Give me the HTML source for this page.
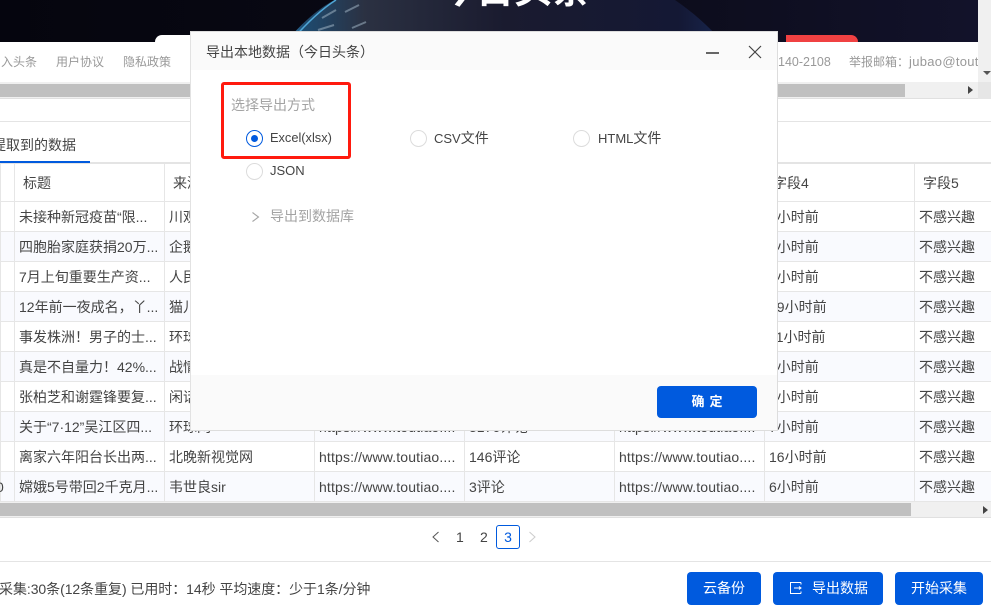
<!DOCTYPE html>
<html lang="zh">
<head>
<meta charset="utf-8">
<title>导出本地数据</title>
<style>
*{box-sizing:border-box}
html,body{margin:0;padding:0;width:991px;height:611px;overflow:hidden;background:#fff;font-family:"Liberation Sans","Noto Sans CJK SC",sans-serif;font-size:14px;color:#444}
.a{position:absolute;white-space:nowrap}
.clip{position:absolute;overflow:hidden;white-space:nowrap}
#tb{position:absolute;left:0;top:162px;border-collapse:collapse;table-layout:fixed;width:991px}
#tb td{height:30px;padding:3px 0 0 4px;border:1px solid #e6e6e6;white-space:nowrap;overflow:hidden;line-height:25px;color:#444;font-size:14px}
#tb tr:first-child td{height:38px;padding-left:8px;border-top:2px solid #e4e4e4}
#tb tr:nth-child(odd):not(:first-child) td{background:#f9fafe}
.u{letter-spacing:.15px}
.btn{position:absolute;top:572px;height:33px;background:#005ade;border-radius:4px;color:#fff;font-size:14px;line-height:33px;text-align:center}
.radio{position:absolute;width:17px;height:17px;border-radius:50%;border:1px solid #dcdcdc;background:#fff}
.l{font-size:13px}
</style>
</head>
<body>
<div class="clip" style="left:0;top:0;width:978px;height:42px;background:#0b0b18">
<svg width="978" height="42" style="position:absolute;left:0;top:0">
<defs>
<linearGradient id="e" x1="0" x2="1" y1="0" y2="0">
<stop offset="0" stop-color="#3b8fc4"/><stop offset=".04" stop-color="#1e4b70"/><stop offset=".18" stop-color="#2b3142"/><stop offset=".5" stop-color="#1a1b2f"/><stop offset=".9" stop-color="#141834"/><stop offset="1" stop-color="#18264e"/>
</linearGradient>
<linearGradient id="s" x1="0" x2="1" y1="0" y2="0">
<stop offset="0" stop-color="#05050e"/><stop offset=".55" stop-color="#0a0a16"/><stop offset="1" stop-color="#12122a"/>
</linearGradient>
</defs>
<rect width="978" height="42" fill="url(#s)"/>
<path d="M286 42C300 25 318 8 338 -2L672 -2C690 10 708 25 722 42Z" fill="url(#e)"/>
<path d="M292 40C306 24 320 10 336 0" fill="none" stroke="#4fa6d6" stroke-width="1.500"/>
<path d="M322 18l14-8M345 12l14-7M318 30l16-5M352 28l14-6" stroke="#9fb3c2" stroke-width="2" opacity=".55" fill="none"/>
</svg>
<div class="a" style="left:438px;top:-27px;font-size:38px;line-height:36px;font-weight:700;color:#fff">今日头条</div>
</div>
<div class="a" style="left:155px;top:35px;width:70px;height:10px;background:#fff;border-radius:7px 0 0 0"></div>
<div class="a" style="left:786px;top:35px;width:72px;height:8px;background:#f04142;border-radius:0 7px 0 0"></div>

<div class="clip" style="left:0;top:42px;width:978px;height:40px;background:#fff;color:#999;font-size:12px;line-height:40px">
<span class="a" style="left:0;top:0;width:37px;overflow:hidden"><span style="margin-left:-11px">加入头条</span></span>
<span class="a" style="left:56px;top:0">用户协议</span>
<span class="a" style="left:123px;top:0">隐私政策</span>
<span class="a" style="left:778px;top:0;font-size:12.500px">140-2108</span>
<span class="a" style="left:849px;top:0;width:129px;overflow:hidden;font-size:12px">举报邮箱：<span style="font-size:13px;letter-spacing:.3px">jubao@toutiao.com</span></span>
</div>
<div class="a" style="left:978px;top:0;width:13px;height:82px;background:#f0f0f0"></div>
<div class="a" style="left:983px;top:71px;width:0;height:0;border:4px solid transparent;border-top:4px solid #555"></div>
<div class="a" style="left:0;top:82px;width:978px;height:17px;background:#f0f0f0;border-bottom:1px solid #e0e0e0"></div>
<div class="a" style="left:978px;top:82px;width:13px;height:17px;background:#e6e6e6"></div>
<div class="a" style="left:0;top:84px;width:905px;height:13px;background:#c0c0c0"></div>
<div class="a" style="left:968px;top:86px;width:0;height:0;border:4px solid transparent;border-left:5px solid #444"></div>
<div class="a" style="left:0;top:121px;width:991px;height:1px;background:#e4e4e4"></div>
<div class="clip" style="left:0;top:135px;width:90px;height:20px;font-size:14px;line-height:20px;color:#444"><span style="margin-left:-8px">提取到的数据</span></div>

<table id="tb">
<colgroup><col style="width:14px"><col style="width:150px"><col style="width:150px"><col style="width:150px"><col style="width:150px"><col style="width:150px"><col style="width:150px"><col style="width:77px"></colgroup>
<tr><td></td><td>标题</td><td>来源</td><td></td><td></td><td></td><td>字段4</td><td>字段5</td></tr>
<tr><td></td><td>未接种新冠疫苗“限...</td><td>川观新闻</td><td></td><td></td><td></td><td>6小时前</td><td>不感兴趣</td></tr>
<tr><td></td><td>四胞胎家庭获捐20万...</td><td>企鹅号</td><td></td><td></td><td></td><td>6小时前</td><td>不感兴趣</td></tr>
<tr><td></td><td>7月上旬重要生产资...</td><td>人民网</td><td></td><td></td><td></td><td>7小时前</td><td>不感兴趣</td></tr>
<tr><td></td><td>12年前一夜成名，丫...</td><td>猫儿</td><td></td><td></td><td></td><td>19小时前</td><td>不感兴趣</td></tr>
<tr><td></td><td>事发株洲！男子的士...</td><td>环球网</td><td></td><td></td><td></td><td>11小时前</td><td>不感兴趣</td></tr>
<tr><td></td><td>真是不自量力！42%...</td><td>战情</td><td></td><td></td><td></td><td>7小时前</td><td>不感兴趣</td></tr>
<tr><td></td><td>张柏芝和谢霆锋要复...</td><td>闲话</td><td></td><td></td><td></td><td>7小时前</td><td>不感兴趣</td></tr>
<tr><td></td><td>关于“7·12”吴江区四...</td><td>环球网</td><td class="u">https://www.toutiao....</td><td>3176评论</td><td class="u">https://www.toutiao....</td><td>7小时前</td><td>不感兴趣</td></tr>
<tr><td></td><td>离家六年阳台长出两...</td><td>北晚新视觉网</td><td class="u">https://www.toutiao....</td><td>146评论</td><td class="u">https://www.toutiao....</td><td>16小时前</td><td>不感兴趣</td></tr>
<tr><td></td><td>嫦娥5号带回2千克月...</td><td>韦世良sir</td><td class="u">https://www.toutiao....</td><td>3评论</td><td class="u">https://www.toutiao....</td><td>6小时前</td><td>不感兴趣</td></tr>
</table>
<div class="clip" style="left:0;top:479px;width:4px;height:16px;line-height:16px"><span style="margin-left:-4px">0</span></div>
<div class="a" style="left:0;top:161px;width:90px;height:2px;background:#005ade;z-index:2"></div>

<div class="a" style="left:0;top:502px;width:991px;height:16px;background:#f0f0f0;border-bottom:1px solid #e0e0e0"></div>
<div class="a" style="left:0;top:503px;width:911px;height:13px;background:#c0c0c0"></div>
<div class="a" style="left:983px;top:506px;width:0;height:0;border:4px solid transparent;border-left:5px solid #444"></div>

<svg class="a" style="left:430px;top:531px" width="12" height="12"><path d="M8.500 1L3 6l5.500 5" fill="none" stroke="#555" stroke-width="1"/></svg>
<div class="a" style="left:456px;top:528px;font-size:14px;line-height:18px">1</div>
<div class="a" style="left:480px;top:528px;font-size:14px;line-height:18px">2</div>
<div class="a" style="left:496px;top:525px;width:24px;height:24px;border:1px solid #005ade;border-radius:3px;color:#005ade;text-align:center;line-height:22px;font-size:14px">3</div>
<svg class="a" style="left:526px;top:531px" width="12" height="12"><path d="M3.500 1L9 6l-5.500 5" fill="none" stroke="#ccc" stroke-width="1"/></svg>

<div class="a" style="left:0;top:561px;width:991px;height:1px;background:#e4e4e4"></div>
<div class="clip" style="left:0;top:580px;width:400px;height:18px;line-height:18px;font-size:14px;color:#444"><span style="margin-left:-1px;letter-spacing:-.06px">采集:30条(12条重复) 已用时：14秒 平均速度：少于1条/分钟</span></div>
<div class="btn" style="left:687px;width:74px">云备份</div>
<div class="btn" style="left:773px;width:110px;padding-left:24px">导出数据</div>
<svg class="a" style="left:789px;top:581px" width="14" height="14"><path d="M12 1.500H1.500V12.500H12M12 1.500V3.500M12 12.500V10.500M5 7H12M10 5.500L12 7L10 8.500" fill="none" stroke="#fff" stroke-width="1"/></svg>
<div class="btn" style="left:895px;width:88px">开始采集</div>

<div class="a" style="left:190px;top:31px;width:588px;height:400px;background:#fff;border:1px solid #ddd;border-left:1px solid #e2e2e2;z-index:5">
<div class="a" style="left:0;top:0;width:586px;height:38px;background:#fafafa"></div>
<div class="a" style="left:15px;top:10px;font-size:14px;line-height:20px;color:#444">导出本地数据（今日头条）</div>
<div class="a" style="left:515px;top:20px;width:13px;height:1.500px;background:#666"></div>
<svg class="a" style="left:557px;top:13px" width="14" height="14"><path d="M1 1L13 13M13 1L1 13" stroke="#444" stroke-width="1.200" fill="none"/></svg>
<div class="a" style="left:30px;top:50px;width:130px;height:77px;border:3px solid #ff1a0e;border-radius:3px"></div>
<div class="a" style="left:40px;top:63px;line-height:20px;color:#a3a3a3;font-size:14px">选择导出方式</div>
<div class="radio" style="left:55px;top:98px;border:1px solid #005ade"></div>
<div class="a" style="left:60px;top:103px;width:7px;height:7px;background:#005ade;border-radius:50%"></div>
<div class="a l" style="left:79px;top:97px;line-height:18px;font-size:12.800px">Excel(xlsx)</div>
<div class="radio" style="left:219px;top:98px"></div>
<div class="a l" style="left:243px;top:97px;line-height:18px">CSV<span style="font-size:14px">文件</span></div>
<div class="radio" style="left:382px;top:98px"></div>
<div class="a l" style="left:407px;top:97px;line-height:18px">HTML<span style="font-size:14px">文件</span></div>
<div class="radio" style="left:55px;top:131px"></div>
<div class="a l" style="left:79px;top:130px;line-height:18px">JSON</div>
<svg class="a" style="left:59px;top:179px" width="11" height="12"><path d="M2.500 1.500L8.500 6L2.500 10.500" fill="none" stroke="#a5a5a5" stroke-width="1.100"/></svg>
<div class="a" style="left:79px;top:174px;line-height:20px;color:#a3a3a3;font-size:14px">导出到数据库</div>
<div class="a" style="left:0;top:343px;width:586px;height:55px;background:#fafafa"></div>
<div class="a" style="left:466px;top:354px;width:100px;height:32px;padding-left:5px;background:#005ade;border-radius:4px;color:#fff;text-align:center;line-height:32px;font-size:13px;font-weight:700;letter-spacing:5px">确定</div>
</div>
</body>
</html>
